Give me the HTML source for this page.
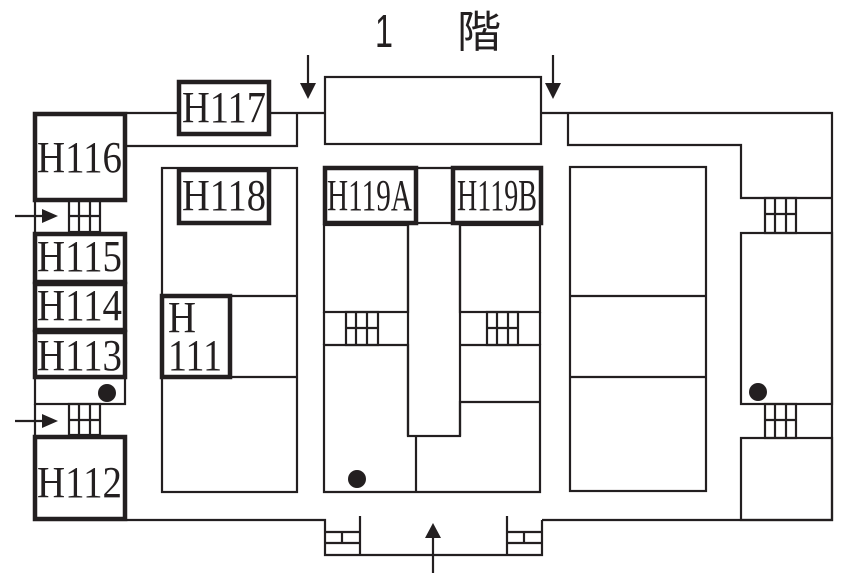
<!DOCTYPE html>
<html><head><meta charset="utf-8"><style>
html,body{margin:0;padding:0;background:#fff;}
svg{display:block}
.l{stroke:#231f20;stroke-width:2.2;fill:none}
.t{stroke:#231f20;stroke-width:4.5;fill:#fff}
.lab{font-family:"Liberation Serif",serif;font-size:44px;fill:#231f20}
</style></head><body>
<svg width="856" height="573" viewBox="0 0 856 573" xmlns="http://www.w3.org/2000/svg">
<text x="375" y="47" font-family="Liberation Sans, Noto Sans CJK JP, sans-serif" font-size="46" fill="#231f20" textLength="18" lengthAdjust="spacingAndGlyphs">1</text>
<text x="457" y="47" font-family="Liberation Sans, Noto Sans CJK JP, sans-serif" font-size="44" fill="#231f20">階</text>

<g class="l">
<line x1="127" y1="113" x2="325" y2="113"/>
<polyline points="127,146 297,146 297,113"/>
<rect x="325" y="77" width="216" height="67"/>
<line x1="308" y1="55" x2="308" y2="88"/>
<line x1="553" y1="55" x2="553" y2="88"/>
<line x1="433" y1="573" x2="433" y2="535"/>
<line x1="15" y1="216" x2="45" y2="216"/>
<line x1="15" y1="421" x2="45" y2="421"/>
<polyline points="541,113 832,113 832,520 542,520"/>
<polyline points="568,113 568,145 741,145 741,198 832,198"/>
<rect x="741" y="233" width="91" height="171"/>
<rect x="741" y="438" width="91" height="82"/>
<rect x="570" y="167" width="136" height="324"/>
<line x1="570" y1="296" x2="706" y2="296"/>
<line x1="570" y1="377" x2="706" y2="377"/>
<line x1="35" y1="200" x2="35" y2="232"/>
<rect x="35" y="378" width="90" height="26"/>
<line x1="35" y1="404" x2="35" y2="435"/>
<rect x="162" y="168" width="135" height="324"/>
<line x1="231" y1="296" x2="297" y2="296"/>
<line x1="162" y1="377" x2="297" y2="377"/>
<line x1="418" y1="168" x2="455" y2="168"/>
<rect x="324" y="225" width="84" height="87"/>
<rect x="460" y="225" width="80" height="87"/>
<rect x="408" y="223" width="52" height="213"/>
<polyline points="408,436 408,345 324,345 324,492 540,492 540,345 460,345"/>
<line x1="416" y1="436" x2="416" y2="492"/>
<polyline points="460,436 460,402 540,402"/>
<line x1="324" y1="312" x2="324" y2="345"/>
<line x1="540" y1="312" x2="540" y2="345"/>
<polyline points="127,520 325,520 325,555 542,555 542,520"/>
<line x1="360" y1="516" x2="360" y2="555"/>
<line x1="507" y1="516" x2="507" y2="555"/>
</g>
<g fill="#231f20">
<polygon points="300,83 316,83 308,99"/>
<polygon points="545,83 561,83 553,99"/>
<polygon points="425,538 441,538 433,523"/>
<polygon points="42,209 42,223 58,216"/>
<polygon points="42,414 42,428 58,421"/>
<circle cx="107" cy="393" r="9"/>
<circle cx="758" cy="392" r="9"/>
<circle cx="357" cy="479" r="9"/>
</g>
<g class="l" stroke-width="1.8">
<g><rect x="69" y="200" width="31" height="32"/><line x1="79" y1="200" x2="79" y2="232"/><line x1="90" y1="200" x2="90" y2="232"/><line x1="69" y1="216" x2="100" y2="216"/></g>
<g transform="translate(0,204)"><rect x="69" y="200" width="31" height="31"/><line x1="79" y1="200" x2="79" y2="231"/><line x1="90" y1="200" x2="90" y2="231"/><line x1="69" y1="216" x2="100" y2="216"/></g>
<g transform="translate(277,112)"><rect x="69" y="200" width="32" height="33"/><line x1="79" y1="200" x2="79" y2="233"/><line x1="90" y1="200" x2="90" y2="233"/><line x1="69" y1="216" x2="101" y2="216"/></g>
<g transform="translate(418,112)"><rect x="69" y="200" width="31" height="33"/><line x1="79" y1="200" x2="79" y2="233"/><line x1="90" y1="200" x2="90" y2="233"/><line x1="69" y1="216" x2="100" y2="216"/></g>
<g transform="translate(696,-2)"><rect x="69" y="200" width="31" height="35"/><line x1="79" y1="200" x2="79" y2="235"/><line x1="90" y1="200" x2="90" y2="235"/><line x1="69" y1="216" x2="100" y2="216"/></g>
<g transform="translate(696,204)"><rect x="69" y="200" width="31" height="34"/><line x1="79" y1="200" x2="79" y2="234"/><line x1="90" y1="200" x2="90" y2="234"/><line x1="69" y1="216" x2="100" y2="216"/></g>
<line x1="325" y1="532" x2="360" y2="532"/><line x1="325" y1="543" x2="360" y2="543"/><line x1="342" y1="532" x2="342" y2="543"/>
<line x1="507" y1="532" x2="542" y2="532"/><line x1="507" y1="543" x2="542" y2="543"/><line x1="524" y1="532" x2="524" y2="543"/>
</g>
<g class="t">
<rect x="35" y="114" width="90" height="86"/>
<rect x="179" y="82" width="90" height="52"/>
<rect x="179" y="170" width="90" height="53"/>
<rect x="325" y="168" width="91" height="55"/>
<rect x="453" y="168" width="88" height="55"/>
<rect x="35" y="234" width="90" height="48"/>
<rect x="35" y="284" width="90" height="46"/>
<rect x="35" y="332" width="90" height="45"/>
<rect x="35" y="437" width="90" height="82"/>
<rect x="162" y="296" width="68" height="81"/>
</g>
<g class="lab">
<text x="37" y="172" textLength="85" lengthAdjust="spacingAndGlyphs">H116</text>
<text x="182" y="122" textLength="84" lengthAdjust="spacingAndGlyphs">H117</text>
<text x="182" y="210" textLength="84" lengthAdjust="spacingAndGlyphs">H118</text>
<text x="327" y="210" textLength="85" lengthAdjust="spacingAndGlyphs">H119A</text>
<text x="457" y="210" textLength="80" lengthAdjust="spacingAndGlyphs">H119B</text>
<text x="37" y="271" textLength="85" lengthAdjust="spacingAndGlyphs">H115</text>
<text x="37" y="320" textLength="85" lengthAdjust="spacingAndGlyphs">H114</text>
<text x="37" y="370" textLength="85" lengthAdjust="spacingAndGlyphs">H113</text>
<text x="37" y="497" textLength="85" lengthAdjust="spacingAndGlyphs">H112</text>
<text x="168" y="332" textLength="28" lengthAdjust="spacingAndGlyphs">H</text>
<text x="168" y="370" textLength="54" lengthAdjust="spacingAndGlyphs">111</text>
</g>
</svg>
</body></html>
